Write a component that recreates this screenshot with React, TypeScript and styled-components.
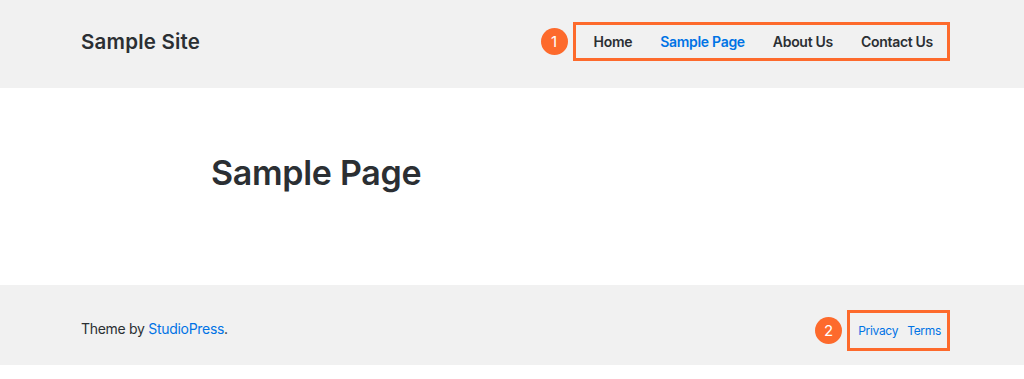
import styled, { createGlobalStyle } from 'styled-components'

const GlobalStyle = createGlobalStyle`
  html, body {
    margin: 0;
    padding: 0;
    background: #ffffff;
  }
  body {
    font-family: Inter, "Liberation Sans", Arial, sans-serif;
    color: #2b2f33;
  }
`

const navItems = [
  { label: 'Home', active: false },
  { label: 'Sample Page', active: true },
  { label: 'About Us', active: false },
  { label: 'Contact Us', active: false },
]

export default function App() {
  return (
    <Page>
      <GlobalStyle />
      <Header>
        <SiteTitle>Sample Site</SiteTitle>
        <Marked $shift={-6}>
          <Badge>1</Badge>
          <NavBox>
            {navItems.map((item) => (
              <NavLink key={item.label} $active={item.active}>
                {item.label}
              </NavLink>
            ))}
          </NavBox>
        </Marked>
      </Header>

      <Main>
        <EntryTitle>Sample Page</EntryTitle>
      </Main>

      <Footer>
        <Credits>
          Theme by <FooterLink>StudioPress</FooterLink>.
        </Credits>
        <Marked $shift={10}>
          <Badge>2</Badge>
          <FooterNav>
            <SmallLink>Privacy</SmallLink>
            <SmallLink>Terms</SmallLink>
          </FooterNav>
        </Marked>
      </Footer>
    </Page>
  )
}

const Page = styled.div`
  width: 1024px;
  min-height: 379px;
  background: #ffffff;
`

const Header = styled.header`
  display: flex;
  align-items: center;
  justify-content: space-between;
  height: 88px;
  padding: 0 74px 0 81px;
  box-sizing: border-box;
  background: #f1f1f1;
`

const SiteTitle = styled.div`
  font-size: 20.5px;
  font-weight: 600;
  letter-spacing: 0.2px;
  color: #2b2f33;
  margin-top: -5px;
`

const Marked = styled.div<{ $shift: number }>`
  display: flex;
  align-items: center;
  gap: 5px;
  margin-top: ${({ $shift }) => $shift}px;
`

const Badge = styled.span`
  display: inline-flex;
  align-items: center;
  justify-content: center;
  width: 27px;
  height: 27px;
  border-radius: 50%;
  background: #fd6a2c;
  color: #ffffff;
  font-size: 15px;
  font-weight: 400;
`

const NavBox = styled.nav`
  display: flex;
  align-items: center;
  gap: 28px;
  height: 39px;
  padding: 0 14px 0 18px;
  box-sizing: border-box;
  border: 3px solid #fd6a2c;
`

const NavLink = styled.span<{ $active: boolean }>`
  font-size: 14px;
  font-weight: 600;
  letter-spacing: -0.3px;
  color: ${({ $active }) => ($active ? '#0073e5' : '#2b2f33')};
`

const Main = styled.main`
  height: 197px;
  padding: 0 0 0 211px;
  display: flex;
  align-items: center;
`

const EntryTitle = styled.h1`
  margin: -28px 0 0;
  font-size: 34px;
  font-weight: 600;
  letter-spacing: -0.3px;
  color: #2b2f33;
`

const Footer = styled.footer`
  display: flex;
  align-items: center;
  justify-content: space-between;
  height: 80px;
  padding: 0 74px 0 81px;
  box-sizing: border-box;
  background: #f1f1f1;
`

const Credits = styled.p`
  margin: 6px 0 0;
  font-size: 14px;
  letter-spacing: -0.3px;
  color: #2b2f33;
`

const FooterLink = styled.span`
  color: #0073e5;
`

const FooterNav = styled.nav`
  display: flex;
  align-items: center;
  gap: 9px;
  height: 41px;
  padding: 0 6px 0 8px;
  box-sizing: border-box;
  border: 3px solid #fd6a2c;
`

const SmallLink = styled.span`
  font-size: 12px;
  letter-spacing: -0.3px;
  color: #0073e5;
`
